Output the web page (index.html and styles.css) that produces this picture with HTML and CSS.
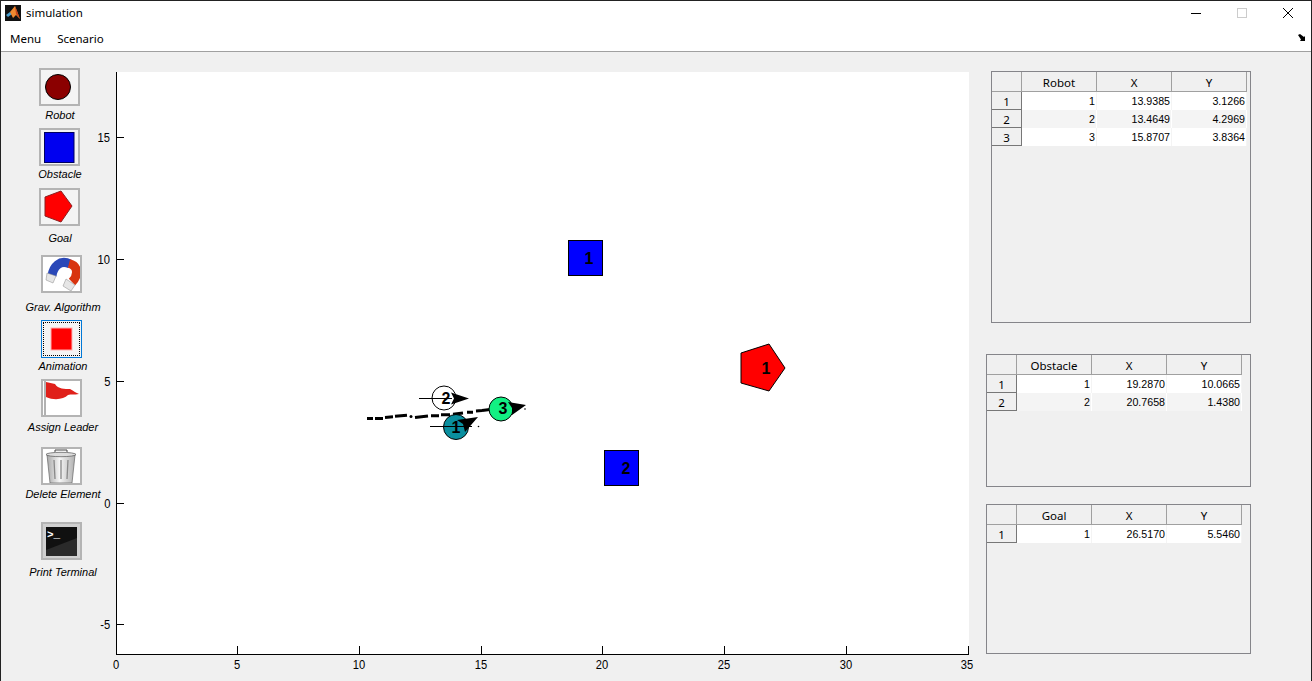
FILE: index.html
```html
<!DOCTYPE html>
<html lang="en">
<head>
  <meta charset="UTF-8">
  <meta name="viewport" content="width=device-width, initial-scale=1.0">
  <title>simulation</title>
  <link rel="stylesheet" href="styles.css">
</head>
<body>
  <div class="titlebar">
    <svg class="app-icon" viewBox="0 0 16 16">
      <rect width="16" height="16" fill="#111"/>
      <polygon points="1,10 5,7 7,9 3,12" fill="#4a9fd0"/>
      <polygon points="5,7 10,1 12,6 15,14 11,10 8,13" fill="#f08a30"/>
      <polygon points="10,1 12,6 15,14 11,9" fill="#c8441c"/>
    </svg>
    <span class="title">simulation</span>
    <div class="window-buttons">
      <svg class="win-btn" viewBox="0 0 46 24"><line x1="18" y1="12.5" x2="28" y2="12.5" stroke="#000"/></svg>
      <svg class="win-btn" viewBox="0 0 46 24"><rect x="18.5" y="7.5" width="9" height="9" fill="none" stroke="#ccc"/></svg>
      <svg class="win-btn" viewBox="0 0 46 24"><path d="M18 7l10 10M28 7l-10 10" stroke="#000" fill="none"/></svg>
    </div>
  </div>

  <div class="menubar">
    <span class="menu-item">Menu</span>
    <span class="menu-item">Scenario</span>
    <svg class="dock" viewBox="0 0 8 8"><path d="M0 1l2-1 4 3 1-1v5H2l1-1.500z" fill="#000"/></svg>
  </div>

  <div class="main">
    <div class="tools">
      <div class="tool tool-robot tool-left">
        <button class="tool-btn">
          <svg viewBox="41 70 37 34"><circle cx="58" cy="87" r="12.5" fill="#8b0000" stroke="#000"/></svg>
        </button>
        <span class="tool-label">Robot</span>
      </div>
      <div class="tool tool-obstacle tool-left">
        <button class="tool-btn">
          <svg viewBox="41 130 37 34"><rect x="44.500" y="132.500" width="29.500" height="30" fill="#0000f0" stroke="#000060"/></svg>
        </button>
        <span class="tool-label">Obstacle</span>
      </div>
      <div class="tool tool-goal tool-left">
        <button class="tool-btn">
          <svg viewBox="41 190 37 34"><polygon points="45,197 61,191 72,206 61,222 45,216" fill="#f00" stroke="#8b2020"/></svg>
        </button>
        <span class="tool-label">Goal</span>
      </div>
      <div class="tool tool-grav">
        <button class="tool-btn">
          <svg viewBox="43 257 37 34">
            <rect x="43" y="257" width="37" height="34" fill="#fff"/>
            <path d="M70 264C60 259 53 267 52 276" fill="none" stroke="#2a48b8" stroke-width="9"/>
            <path d="M69 263.500C79 266 78 276 72 282" fill="none" stroke="#d8340f" stroke-width="9"/>
            <path d="M47 273l9 3-3 7-7-3z" fill="#e6e6e6" stroke="#888" stroke-width=".5"/>
            <path d="M66 279l9 6-4 6-8-5z" fill="#e6e6e6" stroke="#888" stroke-width=".5"/>
          </svg>
        </button>
        <span class="tool-label">Grav. Algorithm</span>
      </div>
      <div class="tool tool-anim">
        <button class="tool-btn tool-btn-focus">
          <svg viewBox="44 323 35 32"><rect x="51" y="328" width="21" height="22" fill="#f00" stroke="#ffb0b0"/></svg>
        </button>
        <span class="tool-label">Animation</span>
      </div>
      <div class="tool tool-leader">
        <button class="tool-btn">
          <svg viewBox="43 381 37 34">
            <rect x="43" y="381" width="37" height="34" fill="#fff"/>
            <line x1="45" y1="381" x2="45" y2="415" stroke="#999" stroke-width="1.500"/>
            <path d="M46 382L55 384C58 389 65 389 70 389C74 391 76 393 79 394C74 395 71 394 68 395C64 399 55 401 46 397z" fill="#e0201a"/>
          </svg>
        </button>
        <span class="tool-label">Assign Leader</span>
      </div>
      <div class="tool tool-delete">
        <button class="tool-btn">
          <svg viewBox="43 449 37 34">
            <defs>
              <linearGradient id="can" x1="0" x2="1" y1="0" y2="0">
                <stop offset="0" stop-color="#a8a8a8"/>
                <stop offset=".45" stop-color="#f6f6f6"/>
                <stop offset="1" stop-color="#b0b0b0"/>
              </linearGradient>
            </defs>
            <rect x="43" y="449" width="37" height="34" fill="#fff"/>
            <path d="M55 452v-2h12v2" fill="none" stroke="#444"/>
            <path d="M47 455h28l-3 28H50z" fill="url(#can)" stroke="#666" stroke-width=".7"/>
            <ellipse cx="61" cy="454.500" rx="15" ry="2.200" fill="#ddd" stroke="#555" stroke-width=".7"/>
            <path d="M54 460l1 19M61 460v19M68 460l-1 19" stroke="#888" stroke-width="1.300"/>
          </svg>
        </button>
        <span class="tool-label">Delete Element</span>
      </div>
      <div class="tool tool-print">
        <button class="tool-btn">
          <svg viewBox="43 524 37 34">
            <rect x="43" y="524" width="37" height="34" fill="#d0d0d0"/>
            <rect x="46" y="527" width="31" height="29" fill="#101010"/>
            <polygon points="46,556 46,550 77,538 77,556" fill="#2a2a2a"/>
            <text class="prompt" x="47" y="538">&gt;_</text>
          </svg>
        </button>
        <span class="tool-label">Print Terminal</span>
      </div>
    </div>

    <svg class="plot" viewBox="88 52 898 629">
      <rect x="116" y="72" width="853" height="582" fill="#fff"/>

      <g class="axis">
        <line x1="116.500" y1="72" x2="116.500" y2="654"/>
        <line x1="116" y1="654.500" x2="969" y2="654.500"/>
        <line x1="116" y1="137.500" x2="124" y2="137.500"/>
        <line x1="116" y1="259.500" x2="124" y2="259.500"/>
        <line x1="116" y1="381.500" x2="124" y2="381.500"/>
        <line x1="116" y1="503.500" x2="124" y2="503.500"/>
        <line x1="116" y1="624.500" x2="124" y2="624.500"/>
        <line x1="237.500" y1="646" x2="237.500" y2="654"/>
        <line x1="359.500" y1="646" x2="359.500" y2="654"/>
        <line x1="481.500" y1="646" x2="481.500" y2="654"/>
        <line x1="602.500" y1="646" x2="602.500" y2="654"/>
        <line x1="724.500" y1="646" x2="724.500" y2="654"/>
        <line x1="846.500" y1="646" x2="846.500" y2="654"/>
        <line x1="968.500" y1="646" x2="968.500" y2="654"/>
      </g>
      <g class="ticks-y">
        <text x="111" y="142">15</text>
        <text x="111" y="264">10</text>
        <text x="111" y="386">5</text>
        <text x="111" y="508">0</text>
        <text x="111" y="629">-5</text>
      </g>
      <g class="ticks-x">
        <text x="116" y="669">0</text>
        <text x="237" y="669">5</text>
        <text x="359" y="669">10</text>
        <text x="481" y="669">15</text>
        <text x="602" y="669">20</text>
        <text x="724" y="669">25</text>
        <text x="846" y="669">30</text>
        <text x="967" y="669">35</text>
      </g>

      <rect x="568.500" y="240.500" width="34" height="35" fill="#00f" stroke="#000"/>
      <text class="mark" x="589" y="264">1</text>
      <rect x="604.500" y="450.500" width="34" height="35" fill="#00f" stroke="#000"/>
      <text class="mark" x="626" y="474">2</text>
      <polygon points="741,353 769,344 785,368 769,391 741,383" fill="#f00" stroke="#000"/>
      <text class="mark" x="766" y="374">1</text>

      <g class="trail">
        <path d="M367 418.600h6M375 418.400h8M385 417.500L393 416.800M395 416.300L407 415.200M415 417.500L428 416M431 415.800h8M441 414.800h9M453 414.200l10-1.200M467 412.300h6M476 411l6-.4M482 410.500l8-1"/>
      </g>
      <circle cx="411" cy="416.600" r="1.500"/>
      <circle cx="478.500" cy="426.500" r=".8"/>
      <circle cx="525" cy="409" r=".8"/>

      <circle cx="456" cy="427" r="12.500" fill="#0a8f9f" stroke="#000"/>
      <line class="heading" x1="430" y1="426.500" x2="472" y2="426.500"/>
      <polygon points="478,417 457,420 463,424 465,432"/>
      <text class="mark" x="456" y="433">1</text>

      <circle cx="444" cy="398" r="12" fill="#fff" stroke="#000"/>
      <line class="heading" x1="419" y1="398.500" x2="452" y2="398.500"/>
      <polygon points="469,398.500 451,392.500 454,398.500 451,404.500"/>
      <text class="mark" x="446" y="404">2</text>

      <circle cx="501" cy="409" r="12" fill="#12f083" stroke="#000"/>
      <polygon points="526,405 508,402 512,408 512,415"/>
      <text class="mark" x="503" y="414">3</text>
    </svg>

    <div class="tables">
      <div class="panel panel-robot">
        <table>
          <tr><th class="corner"></th><th>Robot</th><th>X</th><th>Y</th></tr>
          <tr><th class="row-head">1</th><td>1</td><td>13.9385</td><td>3.1266</td></tr>
          <tr class="alt"><th class="row-head">2</th><td>2</td><td>13.4649</td><td>4.2969</td></tr>
          <tr><th class="row-head">3</th><td>3</td><td>15.8707</td><td>3.8364</td></tr>
        </table>
      </div>
      <div class="panel panel-obstacle">
        <table>
          <tr><th class="corner"></th><th>Obstacle</th><th>X</th><th>Y</th></tr>
          <tr><th class="row-head">1</th><td>1</td><td>19.2870</td><td>10.0665</td></tr>
          <tr class="alt"><th class="row-head">2</th><td>2</td><td>20.7658</td><td>1.4380</td></tr>
        </table>
      </div>
      <div class="panel panel-goal">
        <table>
          <tr><th class="corner"></th><th>Goal</th><th>X</th><th>Y</th></tr>
          <tr><th class="row-head">1</th><td>1</td><td>26.5170</td><td>5.5460</td></tr>
        </table>
      </div>
    </div>
  </div>
</body>
</html>
```

FILE: styles.css
```css
* {
  margin: 0;
  padding: 0;
  box-sizing: border-box;
}

html, body {
  width: 1312px;
  height: 681px;
  overflow: hidden;
}

body {
  display: flex;
  flex-direction: column;
  background-color: #f0f0f0;
  border: 1px solid #222;
  border-bottom: 0;
  font-family: "Noto Sans", sans-serif;
  color: #000;
}

/* title and menu */
.titlebar {
  display: flex;
  align-items: center;
  height: 24px;
  padding-left: 4px;
  background-color: #fff;
}

.app-icon {
  width: 16px;
  height: 16px;
}

.title {
  margin-left: 5px;
  margin-bottom: 1px;
  font-size: 11.500px;
}

.window-buttons {
  display: flex;
  margin-left: auto;
}

.win-btn {
  width: 46px;
  height: 24px;
}

.menubar {
  display: flex;
  align-items: center;
  gap: 16px;
  height: 27px;
  padding-left: 9px;
  padding-right: 5px;
  background-color: #fff;
  border-bottom: 1px solid #a0a0a0;
  font-size: 11.500px;
}

.dock {
  width: 8px;
  height: 8px;
  margin-left: auto;
}

.main {
  display: flex;
  flex: 1;
}

/* left toolbar */
.tools {
  display: flex;
  flex-direction: column;
  width: 87px;
  padding-top: 16px;
}

.tool {
  display: flex;
  flex-direction: column;
  align-items: center;
  padding-left: 34px;
}

.tool-btn {
  display: block;
  flex: none;
  width: 41px;
  height: 38px;
  background-color: #f4f4f4;
  border: 2px solid #b4b4b4;
}

.tool-btn svg {
  display: block;
  width: 37px;
  height: 34px;
}

.tool-btn-focus {
  padding: 2px;
  border: 1px solid #0078d7;
  outline: 1px dotted #000;
  outline-offset: -3px;
}

.tool-btn-focus svg {
  width: 35px;
  height: 32px;
}

.tool-label {
  width: 90px;
  height: 14px;
  margin-left: 3px;
  font: italic 11px/14px "Liberation Sans", sans-serif;
  text-align: center;
  white-space: nowrap;
}

.tool-left {
  width: 117px;
  padding-left: 0;
}

.tool-left .tool-label {
  margin-left: 1px;
}

.tool-robot { margin-bottom: 6px; }
.tool-robot .tool-label { margin-top: 2px; }
.tool-obstacle { margin-bottom: 7px; }
.tool-obstacle .tool-label { margin-top: 1px; }
.tool-goal { margin-bottom: 10px; }
.tool-goal .tool-label { margin-top: 5px; }
.tool-grav { margin-bottom: 6px; }
.tool-grav .tool-label { margin-top: 7px; }
.tool-anim { margin-bottom: 6px; }
.tool-anim .tool-label { margin-top: 1px; }
.tool-leader { margin-bottom: 13px; }
.tool-leader .tool-label { margin-top: 3px; }
.tool-delete { margin-bottom: 21px; }
.tool-delete .tool-label { margin-top: 2px; }
.tool-print .tool-label { margin-top: 5px; }

.prompt {
  font: bold 11px "Liberation Mono", monospace;
  fill: #fff;
}

/* plot */
.plot {
  display: block;
  flex: none;
  width: 898px;
  height: 629px;
}

.axis line {
  stroke: #000;
  stroke-width: 1;
}

.ticks-y text,
.ticks-x text {
  font: 13px "Liberation Sans", sans-serif;
  transform: scaleX(.86);
  transform-box: fill-box;
  transform-origin: center;
}

.ticks-y text {
  text-anchor: end;
}

.ticks-x text {
  text-anchor: middle;
}

.mark {
  font: bold 16px "Liberation Sans", sans-serif;
  text-anchor: middle;
}

.trail path {
  fill: none;
  stroke: #000;
  stroke-width: 3;
}

.heading {
  stroke: #000;
  stroke-width: 1;
}

/* tables */
.tables {
  display: flex;
  flex-direction: column;
  flex: none;
  width: 265px;
}

.panel {
  border: 1px solid #85858a;
}

.panel-robot {
  height: 252px;
  margin-top: 19px;
  margin-left: 5px;
}

.panel-obstacle {
  height: 133px;
  margin-top: 31px;
}

.panel-goal {
  height: 150px;
  margin-top: 17px;
}

table {
  border-collapse: separate;
  border-spacing: 0;
  table-layout: fixed;
  width: 255px;
  font-size: 10.670px;
}

th {
  width: 75px;
  height: 20px;
  padding-top: 2px;
  font-size: 11.500px;
  font-weight: 400;
  background-color: #f0f0f0;
  border-right: 1px solid #a0a0a0;
  border-bottom: 1px solid #a0a0a0;
}

th.corner,
th.row-head {
  width: 30px;
}

th.row-head {
  height: 18px;
  border-right: 1px solid #777;
  border-bottom: 1px solid #777;
}

td {
  height: 18px;
  padding-right: 1px;
  font-family: "Liberation Sans", sans-serif;
  text-align: right;
  background-color: #fff;
  border-right: 1px solid #f4f4f4;
}

.alt td {
  background-color: #f4f4f4;
  border-right: 1px solid #fff;
}
```
